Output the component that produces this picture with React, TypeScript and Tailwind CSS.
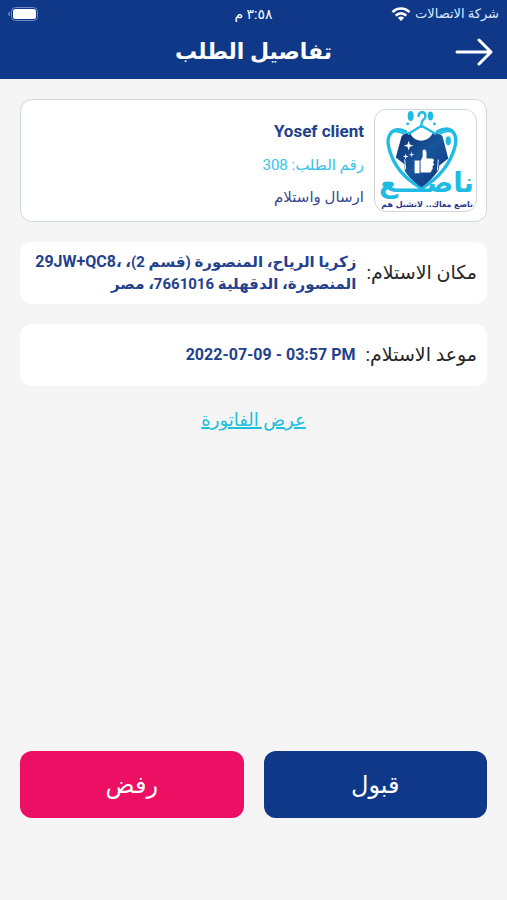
import React from 'react';

interface DetailCardProps {
  label: string;
  children: React.ReactNode;
}

function StatusBar() {
  return (
    <div className="grid grid-cols-3 items-center h-7 px-2 text-sm">
      <div className="flex items-center gap-1 whitespace-nowrap">
        <span className="text-[13px] text-blue-100">شركة الاتصالات</span>
        <WifiIcon />
      </div>
      <span className="text-center">٣:٥٨ م</span>
      <BatteryIcon />
    </div>
  );
}

function WifiIcon() {
  return (
    <svg width="20" height="16" viewBox="0 0 20 16" fill="none" stroke="white" strokeWidth="2.6" className="shrink-0">
      <path d="M1.5 6.2C6.2 1.2 13.8 1.2 18.5 6.2" />
      <path d="M4.7 9.6C7.7 6.6 12.3 6.6 15.3 9.6" />
      <path d="M10 15L6.8 11.8C8.6 10.1 11.4 10.1 13.2 11.8Z" fill="white" stroke="none" />
    </svg>
  );
}

function BatteryIcon() {
  return (
    <svg width="30" height="14" viewBox="0 0 30 14" className="justify-self-end">
      <path d="M1.8 4.8C-.2 5.3-.2 8.7 1.8 9.2Z" fill="#7f98c7" />
      <rect x="3.5" y=".5" width="26" height="13" rx="4" fill="none" stroke="#6f8bc0" />
      <rect x="5" y="2" width="23" height="10" rx="2.5" fill="white" />
    </svg>
  );
}

function BrandLogo() {
  return (
    <svg viewBox="0 0 102 102" className="w-[103px] h-[103px] shrink-0 rounded-xl border border-gray-300 bg-white" role="img" aria-label="ناصع">
      <defs>
        <linearGradient id="shirt" x1="0" y1="0" x2="1" y2="1">
          <stop offset="0" stopColor="#123274" />
          <stop offset=".5" stopColor="#17559b" />
          <stop offset="1" stopColor="#102f7d" />
        </linearGradient>
      </defs>

      <text x="100" y="83" direction="rtl" fill="#1fbbe3" fontSize="28" fontWeight="700" className="font-['DejaVu_Sans',sans-serif]">
        ناصـــع
      </text>

      {/* heart outline */}
      <path d="M47 78C29 69 18 55 14 38L28 21H64L81 36C77 53 65 69 47 78Z" fill="white" />
      <g fill="none" stroke="#1fbbe3" strokeWidth="3.4" strokeLinecap="round">
        <path d="M31 22C17 15 11 27 14 38C18 55 29 69 47 79" />
        <path d="M63 22C75 15 84 22 81 36C77 53 65 69 47 79" />
        <path d="M31 25C24 21 18 21 16 22" strokeWidth="2" />
        <path d="M64 25C70 21 75 21 78 22" strokeWidth="2" />
      </g>

      {/* shirt */}
      <path
        d="M35 22C39 34 54 34 59 22L68 26L74 49L65 56L64 61C59 68 54 73 47 78C40 73 33 67 30 61V55L21 48L27 26Z"
        fill="url(#shirt)"
      />
      <path d="M30 50L31 60M64 50L63 61" stroke="#dff5fc" strokeWidth="1" />

      {/* hanger */}
      <path d="M44 6C44 1 51 1 51 6C51 10 47 9 47 14V17M47 16L34 24M47 16L61 24" fill="none" stroke="#1fbbe3" strokeWidth="2.4" strokeLinecap="round" />

      {/* bubbles */}
      <g fill="#1fbbe3">
        <ellipse cx="36" cy="6" rx="3" ry="5" />
        <ellipse cx="56" cy="6" rx="2.7" ry="4.5" />
        <circle cx="33" cy="14" r="1.5" />
        <circle cx="60" cy="14" r="1.5" />
        <ellipse cx="74" cy="31" rx="2.7" ry="4.5" />
      </g>

      {/* sparkles */}
      <g fill="white">
        <path d="M34 31L35.2 34.8L39 36L35.2 37.2L34 41L32.8 37.2L29 36L32.8 34.8Z" />
        <path d="M31 44L31.7 46.3L34 47L31.7 47.7L31 50L30.3 47.7L28 47L30.3 46.3Z" />
        <path d="M37 42L37.6 44.4L40 45L37.6 45.6L37 48L36.4 45.6L34 45L36.4 44.4Z" />
      </g>

      {/* thumb up */}
      <path
        d="M46 51C49 48 48 45 48 42C48 39 52 39 52 43V49H57C60 49 60 52 58.5 53C60 54 60 56 58 57C59 59 58 60 57 61C57 63 56 63 54 63H46ZM40 51H45V64H40Z"
        fill="white"
      />

      <text x="99" y="98" direction="rtl" fill="#2b3a8c" fontSize="8" fontWeight="700" className="font-['DejaVu_Sans',sans-serif]">
        ناصع معاك.. لاتشيل هم
      </text>
    </svg>
  );
}

function DetailCard({ label, children }: DetailCardProps) {
  return (
    <section className="flex items-center gap-[10px] rounded-xl bg-white px-[10px] py-2 min-h-[62px]">
      <h2 className="shrink-0 text-[19px] leading-6 text-neutral-800">{label}</h2>
      <p className="text-[15px] leading-[22px] font-bold text-[#23418c]">{children}</p>
    </section>
  );
}

export default function App() {
  return (
    <div dir="rtl" className="flex min-h-screen flex-col bg-[#f5f5f5] font-[Roboto,'DejaVu_Sans',sans-serif]">
      <header className="bg-[#103888] text-white">
        <StatusBar />
        <div className="grid grid-cols-[1fr_auto_1fr] items-center h-[51px] px-[14px] pb-1">
          <button type="button" aria-label="رجوع" className="justify-self-start">
            <svg width="38" height="28" viewBox="0 0 38 28" fill="none" stroke="white" strokeWidth="3" strokeLinecap="round" strokeLinejoin="round">
              <path d="M2 14H36M24 2L36 14L24 26" />
            </svg>
          </button>
          <h1 className="text-[22px] font-bold">تفاصيل الطلب</h1>
        </div>
      </header>

      <main className="flex flex-1 flex-col gap-5 px-5 pt-5">
        <section className="flex gap-[10px] rounded-xl border border-gray-300 bg-white p-[9px]">
          <BrandLogo />
          <div className="flex flex-col justify-center gap-[10px] pt-1">
            <h2 className="text-[17px] leading-6 font-bold text-[#23418c]">Yosef client</h2>
            <p className="text-[15px] leading-6 text-[#35c3e8]">رقم الطلب: 308</p>
            <p className="text-[15px] leading-5 text-[#3b4a8c]">ارسال واستلام</p>
          </div>
        </section>

        <DetailCard label="مكان الاستلام:">
          زكريا الرياح، المنصورة (قسم 2)، ،<bdi className="text-base leading-[22px]">29JW+QC8</bdi>
          <br />
          المنصورة، الدقهلية 7661016، مصر
        </DetailCard>

        <DetailCard label="موعد الاستلام:">
          <bdi className="text-base leading-[22px]">2022-07-09 - 03:57 PM</bdi>
        </DetailCard>

        <a href="#invoice" className="self-center text-lg font-medium text-[#20bfdc] underline decoration-2">
          عرض الفاتورة
        </a>

        <div className="mt-auto grid grid-cols-2 gap-5 pb-[82px]">
          <button type="button" className="h-[67px] rounded-xl bg-[#103888] text-2xl text-white">
            قبول
          </button>
          <button type="button" className="h-[67px] rounded-xl bg-[#ed0f63] text-2xl text-white">
            رفض
          </button>
        </div>
      </main>
    </div>
  );
}
